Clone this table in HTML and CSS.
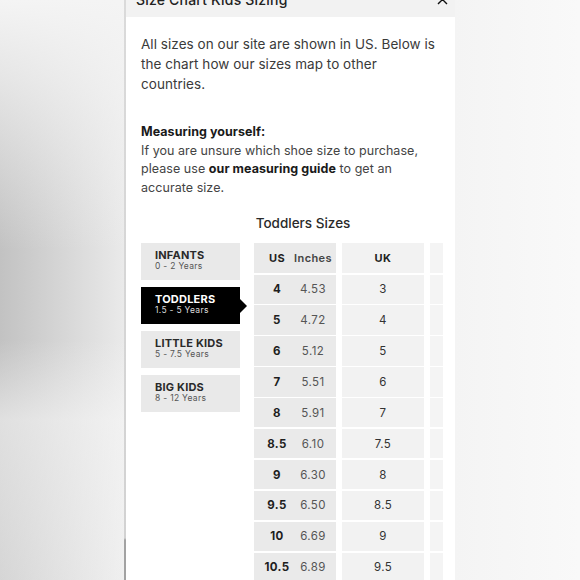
FILE: index.html
```html
<!DOCTYPE html>
<html lang="en">
<head>
<meta charset="utf-8">
<title>Size Chart Kids Sizing</title>
<link rel="stylesheet" href="styles.css">
</head>
<body>
<div class="page">
  <div class="backdrop-left"></div>
  <div class="divider"></div>
  <div class="panel">
    <div class="panel-header">
      <span class="panel-title">Size Chart Kids Sizing</span>
      <svg class="close" width="11" height="11" viewBox="0 0 11 11"><path d="M1 1L10 10M10 1L1 10" stroke="#111" stroke-width="1.4" fill="none"/></svg>
    </div>
    <div class="panel-body">
      <p class="intro">All sizes on our site are shown in US. Below is the chart how our sizes map to other countries.</p>
      <p class="measure"><strong>Measuring yourself:</strong><br>If you are unsure which shoe size to purchase, please use <strong>our measuring guide</strong> to get an accurate size.</p>
      <h2 class="chart-title">Toddlers Sizes</h2>
      <div class="chart">
        <ul class="age-tabs">
          <li class="tab"><span class="tab-name">INFANTS</span><span class="tab-age">0 - 2 Years</span></li>
          <li class="tab active"><span class="tab-name">TODDLERS</span><span class="tab-age">1.5 - 5 Years</span></li>
          <li class="tab"><span class="tab-name">LITTLE KIDS</span><span class="tab-age">5 - 7.5 Years</span></li>
          <li class="tab"><span class="tab-name">BIG KIDS</span><span class="tab-age">8 - 12 Years</span></li>
        </ul>
        <div class="size-table">
          <div class="row head">
            <div class="cell c-us"><span class="us">US</span><span class="in">Inches</span></div>
            <div class="cell c-uk">UK</div>
            <div class="cell c-eu"></div>
          </div>
          <div class="row"><div class="cell c-us"><span class="us">4</span><span class="in">4.53</span></div><div class="cell c-uk">3</div><div class="cell c-eu"></div></div>
          <div class="row"><div class="cell c-us"><span class="us">5</span><span class="in">4.72</span></div><div class="cell c-uk">4</div><div class="cell c-eu"></div></div>
          <div class="row"><div class="cell c-us"><span class="us">6</span><span class="in">5.12</span></div><div class="cell c-uk">5</div><div class="cell c-eu"></div></div>
          <div class="row"><div class="cell c-us"><span class="us">7</span><span class="in">5.51</span></div><div class="cell c-uk">6</div><div class="cell c-eu"></div></div>
          <div class="row"><div class="cell c-us"><span class="us">8</span><span class="in">5.91</span></div><div class="cell c-uk">7</div><div class="cell c-eu"></div></div>
          <div class="row"><div class="cell c-us"><span class="us">8.5</span><span class="in">6.10</span></div><div class="cell c-uk">7.5</div><div class="cell c-eu"></div></div>
          <div class="row"><div class="cell c-us"><span class="us">9</span><span class="in">6.30</span></div><div class="cell c-uk">8</div><div class="cell c-eu"></div></div>
          <div class="row"><div class="cell c-us"><span class="us">9.5</span><span class="in">6.50</span></div><div class="cell c-uk">8.5</div><div class="cell c-eu"></div></div>
          <div class="row"><div class="cell c-us"><span class="us">10</span><span class="in">6.69</span></div><div class="cell c-uk">9</div><div class="cell c-eu"></div></div>
          <div class="row"><div class="cell c-us"><span class="us">10.5</span><span class="in">6.89</span></div><div class="cell c-uk">9.5</div><div class="cell c-eu"></div></div>
        </div>
      </div>
    </div>
  </div>
  <div class="backdrop-right"></div>
</div>
</body>
</html>
```
FILE: styles.css
```css
* { box-sizing: border-box; }
html, body { margin: 0; padding: 0; }
body {
  width: 580px;
  height: 580px;
  overflow: hidden;
  font-family: "Inter", "Liberation Sans", sans-serif;
  color: #333;
  background: #f6f6f6;
}
.page {
  display: flex;
  height: 580px;
  overflow: hidden;
}
.backdrop-left {
  width: 124px;
  flex: none;
  background:
    linear-gradient(to bottom, rgba(244,244,244,1) 0px, rgba(244,244,244,0.7) 80px, rgba(244,244,244,0) 250px, rgba(244,244,244,0) 340px, rgba(248,248,248,0.55) 420px, rgba(250,250,250,0.35) 580px),
    linear-gradient(to right, #c2c2c2 0px, #d2d2d2 50px, #e2e2e2 100px, #eaeaea 124px);
}
.divider {
  width: 2px;
  flex: none;
  background: linear-gradient(to bottom, #dadada 0px, #d2d2d2 538px, #a2a2a2 540px, #a2a2a2 580px);
}
.panel {
  width: 329px;
  flex: none;
  background: #fff;
  margin-top: -19px;
}
.backdrop-right {
  flex: 1;
  background: linear-gradient(to right, #f4f4f4, #f9f9f9);
}
.panel-header {
  height: 36px;
  background: #f2f2f2;
  display: flex;
  align-items: center;
  justify-content: space-between;
  padding: 0 7px 0 10px;
}
.panel-title {
  font-size: 14px;
  font-weight: 500;
  color: #222;
  letter-spacing: 0.2px;
}
.close { display: block; }
.panel-body {
  padding: 17px 12px 0 15px;
}
.intro {
  margin: 0;
  font-size: 13.5px;
  line-height: 20px;
  letter-spacing: 0.05px;
  color: #3a3a3a;
}
.measure {
  margin: 29px 0 0;
  font-size: 12.5px;
  line-height: 18.5px;
  letter-spacing: 0.05px;
  color: #444;
}
.measure strong { color: #1a1a1a; font-weight: 700; }
.chart-title {
  margin: 16px 0 0;
  padding-left: 22px;
  text-align: center;
  font-size: 13.5px;
  line-height: 20px;
  font-weight: 500;
  letter-spacing: 0;
  color: #2a2a2a;
}
.chart {
  margin-top: 10px;
  display: flex;
  gap: 14px;
}
.age-tabs {
  list-style: none;
  margin: 0;
  padding: 0;
  width: 99px;
  flex: none;
  display: flex;
  flex-direction: column;
  gap: 7px;
}
.tab {
  position: relative;
  height: 37px;
  background: #e9e9e9;
  padding: 7px 0 0 14px;
  display: flex;
  flex-direction: column;
  color: #2a2a2a;
}
.tab-name {
  font-size: 11px;
  line-height: 11px;
  font-weight: 700;
  letter-spacing: 0.2px;
}
.tab-age {
  margin-top: 1px;
  font-size: 8.5px;
  line-height: 9px;
  letter-spacing: 0.3px;
  color: #555;
}
.tab.active { background: #000; color: #fff; }
.tab.active .tab-age { color: #ddd; }
.tab.active::after {
  content: "";
  position: absolute;
  right: -7px;
  top: 50%;
  margin-top: -7px;
  border-left: 7px solid #000;
  border-top: 7px solid transparent;
  border-bottom: 7px solid transparent;
}
.size-table {
  flex: 1;
  overflow: hidden;
  display: flex;
  flex-direction: column;
  gap: 1.5px;
}
.row {
  display: flex;
  gap: 6px;
  height: 29.4px;
  flex: none;
}
.row.head { height: 30px; }
.cell {
  width: 82px;
  flex: none;
  display: flex;
  align-items: center;
  justify-content: center;
  font-size: 11.5px;
  letter-spacing: 0.4px;
  color: #333;
}
.c-us { background: #eaeaea; justify-content: flex-start; }
.c-uk { background: #f2f2f2; }
.c-eu { background: #f4f4f4; }
.us {
  width: 46px;
  display: flex;
  justify-content: center;
  font-weight: 700;
  color: #1e1e1e;
}
.in {
  width: 26px;
  display: flex;
  justify-content: center;
  color: #555;
}
.head .cell { font-size: 11px; font-weight: 700; color: #222; }
.head .in { font-weight: 600; color: #444; }
```
